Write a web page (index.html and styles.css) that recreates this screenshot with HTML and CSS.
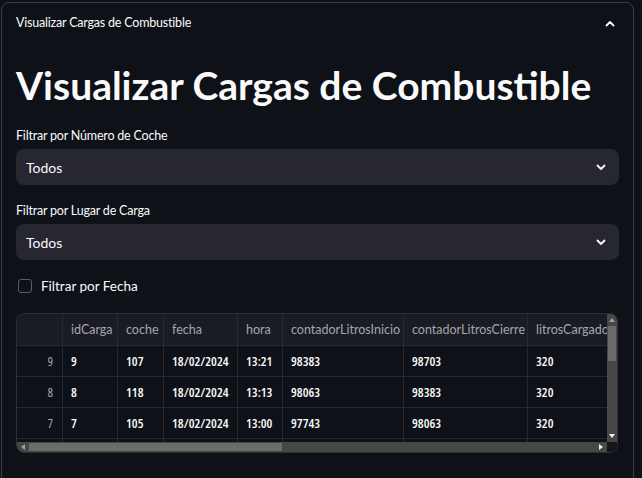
FILE: index.html
```html
<!DOCTYPE html>
<html lang="es">
<head>
<meta charset="utf-8">
<title>Visualizar Cargas de Combustible</title>
<link rel="stylesheet" href="styles.css">
</head>
<body>
<div class="expander">
  <div class="exp-header">
    <span class="exp-label">Visualizar Cargas de Combustible</span>
    <svg class="chev" width="10" height="7" viewBox="0 0 10 7"><path d="M1.5 5.5 L5 2 L8.5 5.5" fill="none" stroke="#fafafa" stroke-width="1.8" stroke-linecap="round" stroke-linejoin="round"/></svg>
  </div>
  <div class="exp-body">
    <h1 class="title">Visualizar Cargas de Combustible</h1>

    <label class="wlabel">Filtrar por Número de Coche</label>
    <div class="select">
      <span>Todos</span>
      <svg class="chev" width="10" height="7" viewBox="0 0 10 7"><path d="M1.5 1.5 L5 5 L8.5 1.5" fill="none" stroke="#fafafa" stroke-width="1.8" stroke-linecap="round" stroke-linejoin="round"/></svg>
    </div>

    <label class="wlabel second">Filtrar por Lugar de Carga</label>
    <div class="select">
      <span>Todos</span>
      <svg class="chev" width="10" height="7" viewBox="0 0 10 7"><path d="M1.5 1.5 L5 5 L8.5 1.5" fill="none" stroke="#fafafa" stroke-width="1.8" stroke-linecap="round" stroke-linejoin="round"/></svg>
    </div>

    <div class="check-row">
      <span class="checkbox"></span>
      <span class="check-label">Filtrar por Fecha</span>
    </div>

    <div class="grid-wrap">
      <div class="cells">
        <div class="row head">
          <div class="c idx"></div>
          <div class="c w1">idCarga</div>
          <div class="c w2">coche</div>
          <div class="c w3">fecha</div>
          <div class="c w4">hora</div>
          <div class="c w5">contadorLitrosInicio</div>
          <div class="c w6">contadorLitrosCierre</div>
          <div class="c w7">litrosCargados</div>
        </div>
        <div class="row">
          <div class="c idx">9</div>
          <div class="c w1">9</div>
          <div class="c w2">107</div>
          <div class="c w3">18/02/2024</div>
          <div class="c w4">13:21</div>
          <div class="c w5">98383</div>
          <div class="c w6">98703</div>
          <div class="c w7">320</div>
        </div>
        <div class="row">
          <div class="c idx">8</div>
          <div class="c w1">8</div>
          <div class="c w2">118</div>
          <div class="c w3">18/02/2024</div>
          <div class="c w4">13:13</div>
          <div class="c w5">98063</div>
          <div class="c w6">98383</div>
          <div class="c w7">320</div>
        </div>
        <div class="row">
          <div class="c idx">7</div>
          <div class="c w1">7</div>
          <div class="c w2">105</div>
          <div class="c w3">18/02/2024</div>
          <div class="c w4">13:00</div>
          <div class="c w5">97743</div>
          <div class="c w6">98063</div>
          <div class="c w7">320</div>
        </div>
        <div class="row">
          <div class="c idx"></div>
          <div class="c w1"></div>
          <div class="c w2"></div>
          <div class="c w3"></div>
          <div class="c w4"></div>
          <div class="c w5"></div>
          <div class="c w6"></div>
          <div class="c w7"></div>
        </div>
      </div>
      <div class="vscroll">
        <span class="arr up"></span>
        <span class="vthumb"></span>
        <span class="arr down"></span>
      </div>
      <div class="hscroll">
        <span class="arr left"></span>
        <span class="hthumb"></span>
        <span class="arr right"></span>
      </div>
      <div class="corner"></div>
    </div>
  </div>
</div>
</body>
</html>
```
FILE: styles.css
```css
* { box-sizing: border-box; }
html, body {
  margin: 0;
  padding: 0;
  background: #0e1117;
  height: 100%;
  overflow: hidden;
}
body {
  font-family: Lato, "Open Sans", sans-serif;
  color: #fafafa;
}
.expander {
  margin: 2px 0 0 1px;
  width: 633px;
  height: 600px;
  border: 1px solid #3b3e44;
  border-radius: 8px;
}
.exp-header {
  height: 40px;
  display: flex;
  align-items: center;
  justify-content: space-between;
  padding: 0 18px 0 14px;
  font-size: 12.5px;
  letter-spacing: -0.2px;
}
.exp-label { line-height: 1; }
.exp-body {
  display: flex;
  flex-direction: column;
  padding: 0 14px 0 14px;
}
.title {
  margin: 19px 0 0 0;
  font-size: 39px;
  line-height: 46px;
  font-weight: 700;
}
.wlabel {
  margin-top: 20px;
  font-size: 12.5px;
  letter-spacing: -0.2px;
  line-height: 15px;
}
.wlabel.second { margin-top: 18px; }
.select {
  margin-top: 6px;
  height: 36px;
  background: #262730;
  border-radius: 8px;
  display: flex;
  align-items: center;
  justify-content: space-between;
  padding: 0 13px 0 10px;
  font-size: 14px;
}
.check-row {
  margin-top: 18px;
  height: 16px;
  display: flex;
  align-items: center;
  gap: 9px;
  padding-left: 2px;
}
.checkbox {
  width: 14px;
  height: 14px;
  border: 1px solid #5b5e65;
  border-radius: 3px;
}
.check-label {
  font-size: 13.5px;
  line-height: 16px;
}
.grid-wrap {
  margin-top: 19px;
  width: 602px;
  border: 1px solid #2c2f36;
  border-radius: 8px;
  overflow: hidden;
  display: grid;
  grid-template-columns: 1fr 10px;
  grid-template-rows: 128px 10px;
}
.cells {
  overflow: hidden;
  font-family: "Open Sans", Lato, sans-serif;
  font-stretch: 75%;
  font-size: 13px;
}
.row {
  display: flex;
  height: 31px;
  border-bottom: 1px solid #262931;
  width: max-content;
}
.row.head {
  height: 32px;
  background: #1a1c24;
  color: #a3a6ad;
  font-family: Lato, sans-serif;
  font-stretch: 100%;
  font-size: 12.5px;
}
.c {
  display: flex;
  align-items: center;
  padding-left: 8px;
  border-right: 1px solid #262931;
  white-space: nowrap;
  font-weight: 600;
  overflow: hidden;
}
.head .c { font-weight: 400; }
.idx {
  width: 46px;
  justify-content: flex-end;
  padding-right: 9px;
  color: #a3a6ad;
}
.row .idx { font-weight: 400; }
.w1 { width: 55px; }
.w2 { width: 46px; }
.w3 { width: 74px; }
.w4 { width: 45px; }
.w5 { width: 121px; }
.w6 { width: 124px; }
.w7 { width: 110px; }
.vscroll {
  background: #474747;
  display: flex;
  flex-direction: column;
  align-items: center;
  padding: 4px 0 4px;
}
.vthumb {
  margin-top: 4px;
  width: 8px;
  height: 35px;
  background: #6b6b6b;
}
.vscroll .down { margin-top: auto; }
.hscroll {
  background: #474747;
  display: flex;
  align-items: center;
  padding: 0 4px;
}
.hthumb {
  margin-left: 4px;
  width: 253px;
  height: 8px;
  background: #6b6b6b;
}
.hscroll .right { margin-left: auto; }
.corner { background: #161616; }
.arr {
  width: 0;
  height: 0;
  border-style: solid;
}
.arr.up { border-width: 0 3px 4px 3px; border-color: transparent transparent #a0a0a0 transparent; }
.arr.down { border-width: 4px 3px 0 3px; border-color: #f0f0f0 transparent transparent transparent; }
.arr.left { border-width: 3px 4px 3px 0; border-color: transparent #a0a0a0 transparent transparent; }
.arr.right { border-width: 3px 0 3px 4px; border-color: transparent transparent transparent #f0f0f0; }
```
